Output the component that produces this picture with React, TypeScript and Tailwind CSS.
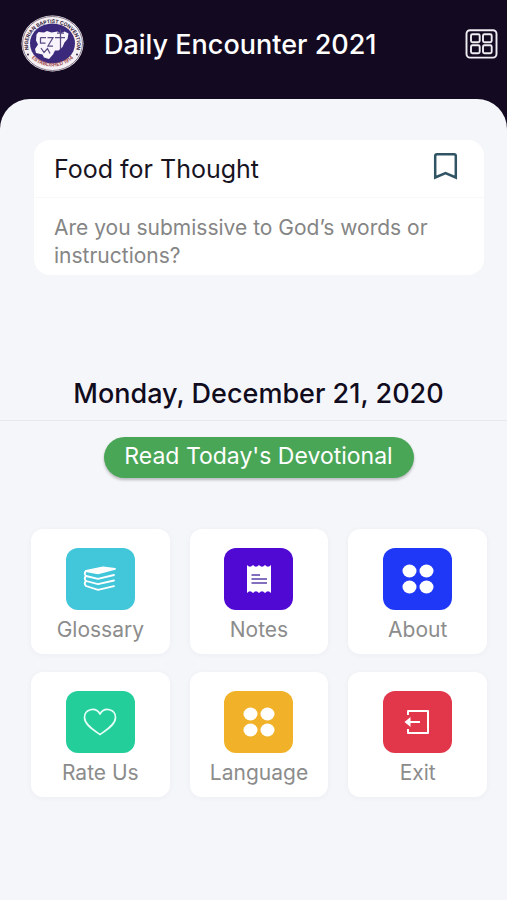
import type { ReactNode } from 'react'

interface MenuItem {
  label: string
  color: string
  icon: ReactNode
}

const ITEMS: MenuItem[] = [
  { label: 'Glossary', color: 'bg-[#42c6da]', icon: <BooksIcon /> },
  { label: 'Notes', color: 'bg-[#5009d3]', icon: <ReceiptIcon /> },
  { label: 'About', color: 'bg-[#1f38f8]', icon: <DotsIcon /> },
  { label: 'Rate Us', color: 'bg-[#24ce9a]', icon: <HeartIcon /> },
  { label: 'Language', color: 'bg-[#f1b229]', icon: <DotsIcon /> },
  { label: 'Exit', color: 'bg-[#e2364a]', icon: <ExitIcon /> },
]

export default function App() {
  return (
    <div className="min-h-dvh bg-[#130a22] font-['Inter',sans-serif]">
      <header className="flex h-[99px] items-start pt-[15px] pr-[9px] pl-[21px] text-white">
        <Logo />
        <h1 className="ml-5 flex-1 pt-3 text-[27px] leading-9 font-medium whitespace-nowrap">Daily Encounter 2021</h1>
        <button aria-label="Menu" className="mt-[14px]">
          <GridIcon />
        </button>
      </header>

      <main className="min-h-[calc(100dvh-99px)] rounded-t-[30px] bg-[#f5f6fa] pt-[41px] pb-10">
        <section className="mr-[23px] ml-[34px] rounded-2xl bg-white">
          <div className="flex h-[58px] items-center justify-between border-b border-[#f8f8fa] pr-[26px] pl-5">
            <h2 className="text-[25px] leading-8 text-[#17141f]">Food for Thought</h2>
            <button aria-label="Bookmark" className="-mt-1">
              <BookmarkIcon />
            </button>
          </div>
          <p className="px-5 pt-4 pb-[5px] text-[21px] leading-7 text-[#858585]">
            Are you submissive to God’s words or instructions?
          </p>
        </section>

        <div className="mt-[101px] border-b border-[#e7e8ec] pb-[8px] pl-[10px] text-center">
          <h2 className="text-[27px] leading-9 font-medium text-[#110c1d]">Monday, December 21, 2020</h2>
        </div>

        <div className="mt-4 flex justify-center pl-[10px]">
          <button className="h-[41px] w-[310px] rounded-full bg-[#4aa657] pb-1 text-[23px] leading-8 text-white shadow-[0_2px_3px_rgba(0,0,0,0.25)]">
            Read Today's Devotional
          </button>
        </div>

        <nav className="mt-[51px] mr-5 ml-[31px] grid grid-cols-3 gap-x-5 gap-y-[18px]">
          {ITEMS.map(item => (
            <button
              key={item.label}
              className="flex h-[125px] flex-col items-center rounded-xl bg-white pt-[19px] shadow-[0_1px_6px_rgba(30,40,70,0.04)]"
            >
              <span className={`flex h-[62px] w-[69px] items-center justify-center rounded-xl ${item.color}`}>
                {item.icon}
              </span>
              <span className="mt-1 text-[21px] leading-8 text-[#8c8c8c]">{item.label}</span>
            </button>
          ))}
        </nav>
      </main>
    </div>
  )
}

function Logo() {
  return (
    <svg width="63" height="57" viewBox="0 0 126 114" role="img" aria-label="Nigerian Baptist Convention">
      <ellipse cx="63" cy="57" rx="62" ry="56" fill="#f4f0f3" />
      <ellipse cx="63" cy="57" rx="60" ry="54" fill="none" stroke="#625268" strokeWidth="1.5" />
      <ellipse cx="63" cy="57" rx="45" ry="40" fill="#3b2a7c" />
      <path id="logo-top" d="M17 74 A49 43 0 1 1 109 74" fill="none" />
      <path id="logo-bottom" d="M14 77 A56 50 0 0 0 112 77" fill="none" />
      <text fontSize="10" fontWeight="700" fill="#35243f">
        <textPath href="#logo-top" startOffset="50%" textAnchor="middle">NIGERIAN BAPTIST CONVENTION</textPath>
      </text>
      <text fontSize="10" fontWeight="700" fill="#a34b4b">
        <textPath href="#logo-bottom" startOffset="50%" textAnchor="middle">ESTABLISHED 1914</textPath>
      </text>
      <circle cx="14" cy="79" r="2" fill="#35243f" />
      <circle cx="112" cy="79" r="2" fill="#35243f" />
      <path
        d="M31 39 L35 34 L46 35 L52 32 L61 35 L73 33 L79 37 L87 33 L95 37 L93 48 L87 55 L83 64 L75 71 L68 71 L64 79 L56 88 L46 85 L43 79 L30 76 L28 68 L34 59 L30 51Z"
        fill="#f7f4fb"
      />
      <path d="M39 45 H50 M39 45 V56 H49 M53 45 H64 L54 62 H64 M68 45 H88 M79 29 V68 M72 36 H86 M40 66 L46 75 L53 67 L58 77" fill="none" stroke="#5a4a84" strokeWidth="2.5" />
    </svg>
  )
}

function GridIcon() {
  return (
    <svg width="33" height="30" viewBox="0 0 33 30" fill="none" stroke="#efedf2" strokeWidth="1.9">
      <rect x="1.5" y="1.2" width="30" height="27.4" rx="3.5" />
      <rect x="6" y="5.3" width="8.7" height="8" rx="1.5" />
      <rect x="18" y="5.3" width="8.7" height="8" rx="1.5" />
      <rect x="6" y="16.3" width="8.7" height="8" rx="1.5" />
      <rect x="18" y="16.3" width="8.7" height="8" rx="1.5" />
    </svg>
  )
}

function BookmarkIcon() {
  return (
    <svg width="25" height="28" viewBox="0 0 25 28" fill="none" stroke="#315465" strokeWidth="2.5">
      <path d="M2.2 24.5 V3 Q2.2 1.3 4 1.3 H21 Q22.8 1.3 22.8 3 V24.5 L12.5 20Z" />
    </svg>
  )
}

function BooksIcon() {
  return (
    <svg width="34" height="26" viewBox="0 0 34 26" fill="none" stroke="white" strokeWidth="1.8" strokeLinecap="round" strokeLinejoin="round">
      <path d="M3 5 L20 1.5 L32 3 L15 7.3Z" fill="white" />
      <path d="M3 5 Q0.5 7.5 3 10 L15 12.8 L31 9" />
      <path d="M3 10 Q0.5 12.5 3 15 L15 18.2 L31 14.5" />
      <path d="M3 15 Q0.5 17.5 3 20 L15 23.9 L31 20.2" />
    </svg>
  )
}

function ReceiptIcon() {
  return (
    <svg width="26" height="30" viewBox="0 0 26 30">
      <path
        d="M1 1 Q4 4.5 7 1 Q10 4.5 13 1 Q16 4.5 19 1 Q22 4.5 25 1 V29 Q22 25.5 19 29 Q16 25.5 13 29 Q10 25.5 7 29 Q4 25.5 1 29Z"
        fill="white"
      />
      <path d="M5.5 11 H14 M5.5 15 H21 M5.5 19 H21" stroke="#5a40a8" strokeWidth="1.4" />
    </svg>
  )
}

function DotsIcon() {
  return (
    <svg width="32" height="30" viewBox="0 0 32 30" fill="white">
      <ellipse cx="7.5" cy="7" rx="7" ry="6.5" />
      <ellipse cx="24.5" cy="7" rx="7" ry="6.5" />
      <ellipse cx="7.5" cy="23" rx="7" ry="6.5" />
      <ellipse cx="24.5" cy="23" rx="7" ry="6.5" />
    </svg>
  )
}

function HeartIcon() {
  return (
    <svg width="34" height="28" viewBox="0 0 34 28" fill="none" stroke="#e6fff6" strokeWidth="1.7" strokeLinejoin="round">
      <path d="M17 26.5 C12 23 1.5 17 1.5 9.5 C1.5 1 12.5 -1.5 17 6 C21.5 -1.5 32.5 1 32.5 9.5 C32.5 17 22 23 17 26.5Z" />
    </svg>
  )
}

function ExitIcon() {
  return (
    <svg width="28" height="26" viewBox="0 0 28 26" fill="none" stroke="white" strokeWidth="2">
      <path d="M4 6 V2 H24 V24 H4 V20" strokeLinejoin="round" />
      <path d="M5 13 H16" />
      <path d="M6.5 8 V18 L0.5 13Z" fill="white" stroke="none" />
    </svg>
  )
}
